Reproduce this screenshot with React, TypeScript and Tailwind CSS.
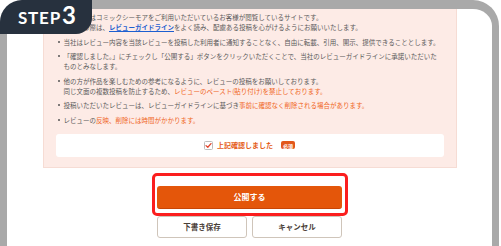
import React from 'react';

type Item = { lines: React.ReactNode[] };

const items: Item[] = [
    {
        lines: [
            '当サイトはコミックシーモアをご利用いただいているお客様が閲覧しているサイトです。',
            <>
                ご投稿の際は、
                <a href="#" className="text-[#1d5fd0] font-bold underline">レビューガイドライン</a>
                をよく読み、配慮ある投稿を心がけるようにお願いいたします。
            </>,
        ],
    },
    { lines: ['当社はレビュー内容を当該レビューを投稿した利用者に通知することなく、自由に転載、引用、開示、提供できることとします。'] },
    {
        lines: [
            '「確認しました。」にチェックし「公開する」ボタンをクリックいただくことで、当社のレビューガイドラインに承諾いただいた',
            'ものとみなします。',
        ],
    },
    {
        lines: [
            '他の方が作品を楽しむための参考になるように、レビューの投稿をお願いしております。',
            <>
                同じ文面の複数投稿を防止するため、
                <span className="text-[#f0651c]">レビューのペースト(貼り付け)を禁止しております。</span>
            </>,
        ],
    },
    {
        lines: [
            <>
                投稿いただいたレビューは、レビューガイドラインに基づき
                <span className="text-[#f0651c]">事前に確認なく削除される場合があります。</span>
            </>,
        ],
    },
    {
        lines: [
            <>
                レビューの<span className="text-[#f0651c]">反映、削除には時間がかかります。</span>
            </>,
        ],
    },
];

const CheckIcon = () => (
    <svg width="9" height="9" viewBox="0 0 9 9" className="shrink-0">
        <rect x="0.5" y="0.5" width="8" height="8" rx="1" fill="#fff" stroke="#bdbdbd" />
        <path d="M2 4.6 L3.8 6.3 L7 2.6" fill="none" stroke="#e2452c" strokeWidth="1.3" strokeLinecap="round" strokeLinejoin="round" />
    </svg>
);

const App: React.FC = () => {
    return (
        <div className="relative w-[501px] h-[246px] overflow-hidden bg-white font-['Noto_Sans_CJK_JP','Noto_Sans',sans-serif]">
            {/* device frame */}
            <div className="w-[499px] h-[300px] border-[#a9a9a9] border-t-[9px] border-x-[7px] rounded-t-[26px]">
                <div className="mx-auto w-[414px] bg-[#fdebe6] border-x border-b border-[#f6dcd4] pt-[3px] px-[12px] pb-[10px]">
                    <ul className="pl-[2px] text-[6.5px] leading-[10px] text-[#5a5a5a] whitespace-nowrap">
                        {items.map((item, i) => (
                            <li key={i} className={`flex gap-[4px] ${i > 0 ? 'mt-[4.5px]' : ''}`}>
                                <span className="mt-[4px] w-[2px] h-[2px] rounded-full bg-[#555] shrink-0" />
                                <div className="flex flex-col">
                                    {item.lines.map((line, j) => (
                                        <span key={j}>{line}</span>
                                    ))}
                                </div>
                            </li>
                        ))}
                    </ul>
                    <div className="mt-[9px] h-[23px] bg-white rounded-[3px] flex items-center justify-center gap-[4px]">
                        <CheckIcon />
                        <span className="text-[7px] font-bold text-[#e45c18]">上記確認しました</span>
                        <span className="ml-[4px] px-[2px] h-[8px] flex items-center rounded-[2px] bg-[#e2561a] text-white text-[5px] font-bold leading-none">必須</span>
                    </div>
                </div>

                <div className="flex flex-col items-center mt-[13px]">
                    <div className="relative">
                        <div className="absolute -left-[5px] -right-[6px] -top-[8px] -bottom-[7px] border-[3px] border-[#fb1e1e] rounded-[5px]" />
                        <button className="relative w-[185px] h-[23px] rounded-[3px] bg-[#e4560a] border-b border-[#c84606] text-white text-[8px] font-bold">
                            公開する
                        </button>
                    </div>
                    <div className="mt-[7px] flex gap-[5px]">
                        <button className="w-[90px] h-[22px] rounded-[3px] bg-white border border-[#cfc5ba] text-[7.5px] font-bold text-[#4a4038]">
                            下書き保存
                        </button>
                        <button className="w-[90px] h-[22px] rounded-[3px] bg-white border border-[#cfc5ba] text-[7.5px] font-bold text-[#4a4038]">
                            キャンセル
                        </button>
                    </div>
                </div>
            </div>

            {/* STEP badge */}
            <div className="absolute left-0 top-0 w-[92px] h-[34px] bg-[#27313e] rounded-tl-[22px] rounded-br-[16px] flex items-end pl-[18px] pb-[8px] text-white font-['Lato','Open_Sans',sans-serif] font-bold leading-none">
                <span className="text-[17px] tracking-[0.8px]">STEP</span>
                <span className="text-[24px] ml-[1px] -mb-[1px]">3</span>
            </div>
        </div>
    );
};

export default App;
